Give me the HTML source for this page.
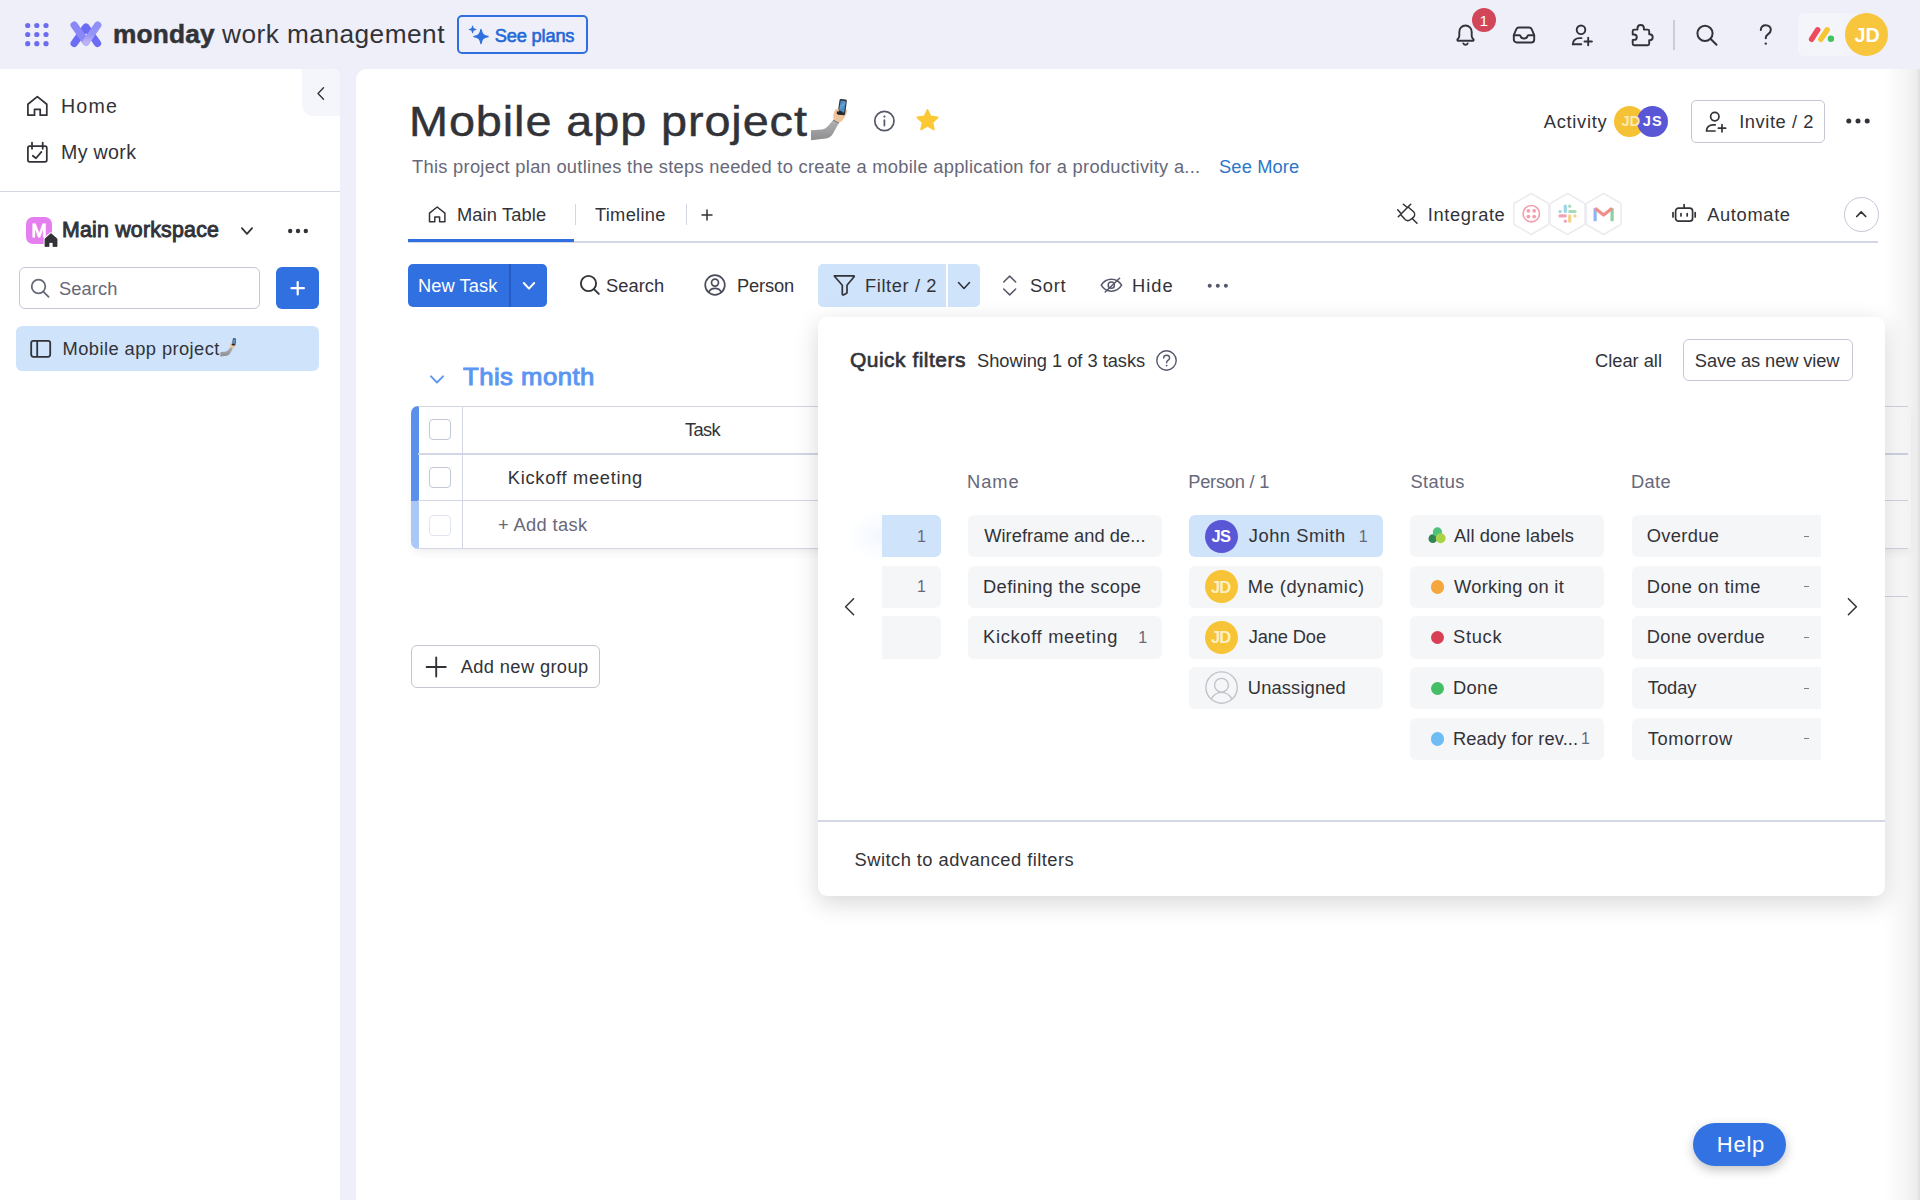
<!DOCTYPE html>
<html lang="en"><head><meta charset="utf-8"><title>Mobile app project</title>
<style>
html,body{margin:0;padding:0}
body{width:1920px;height:1200px;overflow:hidden;position:relative;background:#eeeff9;font-family:"Liberation Sans",sans-serif}
.abs{position:absolute}
.t{position:absolute;white-space:nowrap;line-height:1;font-family:"Liberation Sans",sans-serif;transform-origin:0 50%}
.cb{width:21.500px;height:21px;border:1.300px solid #c5c8d6;border-radius:4px;box-sizing:border-box;background:#fff}
</style></head>
<body>
<!-- ===== TOP BAR ===== -->
<div class="abs" style="left:0;top:0;width:1920px;height:1200px;background:#eeeff9"></div>
<!-- grid dots -->
<svg class="abs" style="left:22px;top:20px" width="30" height="30" viewBox="0 0 30 30"><g fill="#6c6cf2">
<circle cx="5.7" cy="5.5" r="2.6"/><circle cx="14.8" cy="5.5" r="2.6"/><circle cx="24" cy="5.5" r="2.6"/>
<circle cx="5.7" cy="14.5" r="2.6"/><circle cx="14.8" cy="14.5" r="2.6"/><circle cx="24" cy="14.5" r="2.6"/>
<circle cx="5.7" cy="23.7" r="2.6"/><circle cx="14.8" cy="23.7" r="2.6"/><circle cx="24" cy="23.7" r="2.6"/></g></svg>
<!-- logo X -->
<svg class="abs" style="left:66px;top:18px" width="40" height="32" viewBox="0 0 40 32">
<defs><linearGradient id="lg1" x1="0" y1="0" x2="0" y2="1"><stop offset="0" stop-color="#9090f8"/><stop offset=".55" stop-color="#9494f8"/><stop offset="1" stop-color="#bcb2f6"/></linearGradient></defs>
<g stroke-linecap="round" stroke-linejoin="round" stroke-width="7.300" fill="none">
<path d="M8.200 25.300L20 9l11.500 16.300" stroke="#6b6bf6"/>
<path d="M8.200 7.200L20 24" stroke="#8a88f7"/>
<path d="M31.700 7.200L20 24" stroke="url(#lg1)"/>
</g></svg>
<!-- See plans button -->
<div class="abs" style="left:457px;top:15px;width:130.5px;height:39px;border:2.3px solid #2f6fe0;border-radius:5px;box-sizing:border-box"></div>
<svg class="abs" style="left:467px;top:24px" width="24" height="24" viewBox="0 0 24 24" fill="#2f6fe0">
<path d="M14 5.500c.8 4.600 2.400 6.200 7 7-4.600.8-6.200 2.400-7 7-.8-4.600-2.400-6.200-7-7 4.600-.8 6.200-2.400 7-7z" stroke="#2f6fe0" stroke-width="1.400" stroke-linejoin="round"/>
<path d="M5.600 1.800c.4 2.400 1.300 3.300 3.700 3.700-2.400.4-3.300 1.300-3.700 3.700-.4-2.400-1.300-3.300-3.700-3.700 2.400-.4 3.300-1.300 3.700-3.700z" stroke="#2f6fe0" stroke-width=".7" stroke-linejoin="round"/>
</svg>
<!-- bell -->
<svg class="abs" style="left:1453px;top:22px" width="26" height="26" viewBox="0 0 26 26" fill="none" stroke="#323338" stroke-width="1.9" stroke-linecap="round" stroke-linejoin="round">
<path d="M12.500 3.500c-3.600 0-6.200 2.800-6.200 6.400v4.100c0 1.200-.7 2.300-1.700 3.200-.5.500-.3 1.500.6 1.500h14.600c.9 0 1.100-1 .6-1.500-1-.9-1.700-2-1.700-3.200v-4.100c0-3.600-2.600-6.400-6.200-6.400z"/>
<path d="M10.300 21.400c.5.900 1.300 1.400 2.200 1.400s1.700-.5 2.200-1.400"/>
</svg>
<div class="abs" style="left:1472px;top:8px;width:24px;height:24px;border-radius:50%;background:#d14658"></div>
<!-- inbox -->
<svg class="abs" style="left:1511px;top:22px" width="26" height="26" viewBox="0 0 26 26" fill="none" stroke="#323338" stroke-width="1.9" stroke-linecap="round" stroke-linejoin="round">
<path d="M2.800 13.200l2.400-5.800c.5-1.200 1.600-1.900 2.900-1.900h9.800c1.300 0 2.400.7 2.900 1.900l2.400 5.800v4.300c0 1.700-1.300 3-3 3h-14.400c-1.700 0-3-1.300-3-3z"/>
<path d="M2.800 13.200h5.700c.5 0 .9.300 1 .8.300 1.400 1.500 2.500 3.500 2.500s3.200-1.100 3.500-2.500c.1-.5.500-.8 1-.8h5.700"/>
</svg>
<!-- invite person -->
<svg class="abs" style="left:1569px;top:22px" width="26" height="26" viewBox="0 0 26 26" fill="none" stroke="#323338" stroke-width="1.9" stroke-linecap="round" stroke-linejoin="round">
<circle cx="12" cy="7.800" r="4.300"/>
<path d="M3.800 22.300c0-3.800 3-6.200 6.500-6.200h2.200"/>
<path d="M3.800 22.300h8.500"/>
<path d="M19.200 15.800v7.400M15.500 19.500h7.400"/>
</svg>
<!-- puzzle -->
<svg class="abs" style="left:1628px;top:22px" width="26" height="26" viewBox="0 0 26 26" fill="none" stroke="#323338" stroke-width="1.9" stroke-linecap="round" stroke-linejoin="round">
<path d="M9.500 6.300c0-1.900 1.400-3.300 3.200-3.300s3.200 1.400 3.200 3.300v1.300h3.800c.8 0 1.500.7 1.500 1.500v3.200h.4c1.800 0 3.100 1.300 3.100 3s-1.300 3-3.100 3h-.4v3.400c0 .8-.7 1.500-1.500 1.500h-13.500c-.8 0-1.500-.7-1.500-1.500v-3.800h1.300c1.600 0 2.800-1.100 2.800-2.700s-1.200-2.700-2.800-2.700h-1.300v-3.400c0-.8.7-1.500 1.500-1.500h3.300z"/>
</svg>
<div class="abs" style="left:1673px;top:20px;width:1.500px;height:29.500px;background:#c9ccd9"></div>
<!-- search -->
<svg class="abs" style="left:1694px;top:22px" width="26" height="26" viewBox="0 0 26 26" fill="none" stroke="#323338" stroke-width="2" stroke-linecap="round">
<circle cx="11" cy="11.300" r="7.600"/><path d="M16.700 17l5.800 5.800"/>
</svg>
<!-- help ? -->
<svg class="abs" style="left:1753px;top:22px" width="26" height="26" viewBox="0 0 26 26" fill="none" stroke="#323338" stroke-width="2" stroke-linecap="round" stroke-linejoin="round">
<path d="M7.800 8c.2-2.700 2.200-4.700 5-4.700 2.900 0 5 1.900 5 4.600 0 2.300-1.400 3.400-2.900 4.400-1.300.9-2.100 1.600-2.100 3.300v.6"/>
<circle cx="12.800" cy="21.600" r="1.200" fill="#323338" stroke="none"/>
</svg>
<!-- product switcher -->
<div class="abs" style="left:1797.500px;top:13px;width:70px;height:43px;border-radius:6px 0 0 6px;background:linear-gradient(90deg,#f4f5fb 0,#f4f5fb 60%,rgba(244,245,251,0) 100%)"></div>
<svg class="abs" style="left:1806px;top:23.700px" width="32" height="22" viewBox="0 0 32 22" fill="none" stroke-linecap="round">
<line x1="5.600" y1="15.300" x2="11.700" y2="5.800" stroke="#ef4b5e" stroke-width="5.500"/>
<line x1="14.900" y1="15.300" x2="21.200" y2="5.800" stroke="#f6c535" stroke-width="5.500"/>
<circle cx="24.900" cy="14.800" r="3.200" fill="#3fc45f"/>
</svg>
<div class="abs" style="left:1845.200px;top:13.100px;width:42.800px;height:42.800px;border-radius:50%;background:#f7c63c"></div>

<!-- ===== SIDEBAR ===== -->
<div class="abs" style="left:0;top:69.300px;width:340px;height:1131px;background:#fff;border-top-right-radius:7px"></div>
<div class="abs" style="left:302px;top:69.300px;width:38px;height:47.200px;background:#f5f6fb;border-radius:0 7px 0 12px"></div>
<svg class="abs" style="left:313px;top:85px" width="16" height="16" viewBox="0 0 16 16" fill="none" stroke="#323338" stroke-width="1.400" stroke-linecap="round" stroke-linejoin="round"><path d="M10.500 2.800l-5.500 5.700 5.500 5.700"/></svg>
<!-- home -->
<svg class="abs" style="left:24px;top:93px" width="28" height="28" viewBox="0 0 28 28" fill="none" stroke="#323338" stroke-width="1.750" stroke-linecap="round" stroke-linejoin="round">
<path d="M3.900 11.300L13.350 3.600L22.800 11.300V22.200H16.200V16.300H10.500V22.200H3.900Z"/>
</svg>
<!-- my work -->
<svg class="abs" style="left:24px;top:139px" width="28" height="28" viewBox="0 0 28 28" fill="none" stroke="#323338" stroke-width="1.750" stroke-linecap="round" stroke-linejoin="round">
<rect x="3.900" y="7.100" width="18.900" height="15.800" rx="1.800"/>
<path d="M8 3.600v6.200M18.700 3.600v6.200"/>
<path d="M8.800 16.700l3.200 2.600 5.400-6.400"/>
</svg>
<div class="abs" style="left:0;top:190.800px;width:340px;height:1.400px;background:#d3d6e5"></div>
<!-- workspace icon -->
<div class="abs" style="left:25.500px;top:217px;width:26.500px;height:27px;border-radius:7px;background:#e57ff0"></div>
<svg class="abs" style="left:42px;top:231px" width="18" height="18" viewBox="0 0 18 18">
<path d="M9 2.600l6 5.200v7.700h-4v-4h-4v4h-4v-7.700z" fill="#323338" stroke="#fff" stroke-width="2.600" stroke-linejoin="round"/>
<path d="M9 2.600l6 5.200v7.700h-4v-4h-4v4h-4v-7.700z" fill="#323338" stroke="#323338" stroke-width=".8" stroke-linejoin="round"/>
</svg>
<svg class="abs" style="left:238px;top:223px" width="18" height="16" viewBox="0 0 18 16" fill="none" stroke="#323338" stroke-width="1.800" stroke-linecap="round" stroke-linejoin="round"><path d="M3.900 5.200l5.100 5.600 5.100-5.600"/></svg>
<svg class="abs" style="left:285px;top:226px" width="26" height="10" viewBox="0 0 26 10" fill="#323338"><circle cx="5.200" cy="5" r="2.200"/><circle cx="13" cy="5" r="2.200"/><circle cx="20.800" cy="5" r="2.200"/></svg>
<!-- sidebar search -->
<div class="abs" style="left:18.500px;top:267px;width:241.500px;height:42px;border:1.300px solid #c5c8d6;border-radius:6px;box-sizing:border-box;background:#fff"></div>
<svg class="abs" style="left:28px;top:276px" width="24" height="24" viewBox="0 0 24 24" fill="none" stroke="#676879" stroke-width="1.800" stroke-linecap="round"><circle cx="10.500" cy="10.500" r="6.800"/><path d="M15.600 15.800l5 5"/></svg>
<div class="abs" style="left:276px;top:266.500px;width:42.800px;height:42.500px;border-radius:6px;background:#3070e1"></div>
<svg class="abs" style="left:288px;top:278px" width="20" height="20" viewBox="0 0 20 20" stroke="#fff" stroke-width="2.200" stroke-linecap="round"><path d="M9.700 4v12.400M3.500 10.200h12.400"/></svg>
<!-- sidebar selected item -->
<div class="abs" style="left:16px;top:326px;width:302.800px;height:45px;border-radius:6px;background:#cfe3fb"></div>
<svg class="abs" style="left:28px;top:336px" width="26" height="26" viewBox="0 0 26 26" fill="none" stroke="#323338" stroke-width="1.800" stroke-linejoin="round"><rect x="3.200" y="4.800" width="19" height="16" rx="2.200"/><path d="M9.200 4.800v16"/></svg>
<!-- ===== CONTENT PANEL ===== -->
<div class="abs" style="left:356px;top:69.300px;width:1564px;height:1131px;background:#fff;border-top-left-radius:11px"></div>
<!-- emoji selfie (title) -->
<svg width="0" height="0" style="position:absolute"><symbol id="selfie" viewBox="0 0 44 48"><defs><linearGradient id="slv" x1="0" y1="0" x2="0" y2="1"><stop offset="0" stop-color="#b2b2b4"/><stop offset="1" stop-color="#8e8e91"/></linearGradient></defs>
<path d="M3 34.200L14 33.400Q17.500 33 19.600 30.500L25.400 23.800L31.200 26.600L24.600 38.200Q22.500 41.600 18 42.400L3 44.200Z" fill="url(#slv)"/>
<path d="M25.100 24.100L31 26.900" stroke="#77777b" stroke-width="1.100" fill="none"/>
<path d="M25.800 23.600C25 20 25.200 16.500 27 14.200C28.500 12.500 30.500 12.800 31.500 14L38.600 13.200C39.300 15.500 38.600 18.500 36.800 21L33.600 25.400L31.200 26.600Z" fill="#efc49c"/>
<g transform="rotate(8 34.500 11)"><rect x="30.600" y="3.200" width="7.400" height="15.800" rx="1.500" fill="#2b3037"/><rect x="31.700" y="4.800" width="5.200" height="11.400" rx=".5" fill="#4c8ec2"/><path d="M31.700 10l5.200-5.200v3.500l-5.200 6z" fill="#6aa7d6" opacity=".7"/></g>
<path d="M28.800 15.200c1.800-.9 4-.5 5.600.5l-.4 2.600c-1.600.8-3.800.7-5.200-.3z" fill="#23262b"/>
<path d="M27 14.200c1.200-1.400 2.800-1.600 4-.6l-.5 2.200c-1-.6-2.200-.5-3.200.2z" fill="#efc49c"/>
</symbol></svg>
<svg class="abs" style="left:808px;top:96px" width="44" height="48"><use href="#selfie"/></svg>
<svg class="abs" style="left:219.300px;top:337.400px" width="19.400" height="21.100"><use href="#selfie"/></svg>
<!-- info icon -->
<svg class="abs" style="left:872px;top:109px" width="24" height="24" viewBox="0 0 24 24" fill="none" stroke="#55586a" stroke-width="1.700" stroke-linecap="round"><circle cx="12.400" cy="12" r="9.600"/><path d="M12.400 11v5.600"/><circle cx="12.400" cy="7.600" r="1.100" fill="#55586a" stroke="none"/></svg>
<!-- star -->
<svg class="abs" style="left:914px;top:107px" width="27" height="27" viewBox="0 0 27 27"><path d="M13.500 2.800l3.100 6.600 7.200.9-5.300 5 1.400 7.200-6.400-3.600-6.400 3.600 1.400-7.200-5.300-5 7.200-.9z" fill="#fcc835" stroke="#fcc835" stroke-width="1.600" stroke-linejoin="round"/></svg>
<!-- activity avatars -->
<div class="abs" style="left:1614.200px;top:105.800px;width:31px;height:31px;border-radius:50%;background:#f5c235"></div>
<div class="abs" style="left:1636.500px;top:105.800px;width:31px;height:31px;border-radius:50%;background:#5957d6"></div>
<!-- invite button -->
<div class="abs" style="left:1691px;top:100px;width:134.300px;height:42.500px;border:1.300px solid #c4c6d2;border-radius:5px;box-sizing:border-box"></div>
<svg class="abs" style="left:1703px;top:109px" width="26" height="26" viewBox="0 0 26 26" fill="none" stroke="#323338" stroke-width="1.700" stroke-linecap="round" stroke-linejoin="round">
<circle cx="11.800" cy="7.600" r="4.200"/><path d="M3.500 22c0-3.800 3-6.200 6.500-6.200h2.200M3.500 22h8.500M19 15.600v7.200M15.400 19.200h7.200"/></svg>
<svg class="abs" style="left:1844px;top:116px" width="28" height="10" viewBox="0 0 28 10" fill="#323338"><circle cx="4.800" cy="5" r="2.500"/><circle cx="14" cy="5" r="2.500"/><circle cx="23.200" cy="5" r="2.500"/></svg>
<!-- tabs -->
<svg class="abs" style="left:426px;top:204px" width="22" height="22" viewBox="0 0 22 22" fill="none" stroke="#323338" stroke-width="1.500" stroke-linecap="round" stroke-linejoin="round">
<path d="M3.500 9.100L11.200 3L18.900 9.100V17.800H13.600V13.100H8.800V17.800H3.500Z"/></svg>
<div class="abs" style="left:408px;top:241.300px;width:1470.300px;height:1.300px;background:#d3d6e5"></div>
<div class="abs" style="left:408px;top:238.600px;width:166.400px;height:3px;background:#2f6fe0"></div>
<div class="abs" style="left:574.800px;top:204px;width:1.300px;height:21px;background:#d3d6e5"></div>
<div class="abs" style="left:685.600px;top:204px;width:1.300px;height:21px;background:#d3d6e5"></div>
<svg class="abs" style="left:699px;top:207px" width="16" height="16" viewBox="0 0 16 16" stroke="#323338" stroke-width="1.500" stroke-linecap="round"><path d="M8 3v10M3 8h10"/></svg>
<!-- integrate -->
<svg class="abs" style="left:1395px;top:201px" width="26" height="26" viewBox="0 0 26 26" fill="none" stroke="#323338" stroke-width="1.500" stroke-linecap="round" stroke-linejoin="round">
<path d="M3.300 15.700L15.700 3.300M8.300 3.200L12 6.300M2.700 8.800L6.200 12.700M17.200 17.400L22 22.300"/>
<path d="M13.400 6.200L18.600 10.700Q20.400 12.500 19.600 14.600Q19 16.100 17.200 17.400L14.600 19.100Q12.300 20.300 10.400 18.700L5.800 13.800"/>
</svg>
<!-- hexagons -->
<svg class="abs" style="left:1510px;top:191px" width="116" height="46" viewBox="0 0 116 46" fill="#fff" stroke="#ececf0" stroke-width="1.600" stroke-linejoin="round">
<path id="hx" d="M21.300 2.500l16.500 9.500a2 2 0 0 1 1 1.700v18.600a2 2 0 0 1-1 1.700l-16.500 9.500-16.500-9.500a2 2 0 0 1-1-1.700v-18.600a2 2 0 0 1 1-1.700z"/>
<use href="#hx" x="36.200"/><use href="#hx" x="72.300"/>
<g stroke="none">
<circle cx="21.300" cy="22.700" r="8.200" fill="none" stroke="#f5a0ac" stroke-width="1.700"/>
<circle cx="18.400" cy="19.800" r="1.900" fill="#f5a0ac"/><circle cx="24.200" cy="19.800" r="1.900" fill="#f5a0ac"/><circle cx="18.400" cy="25.600" r="1.900" fill="#f5a0ac"/><circle cx="24.200" cy="25.600" r="1.900" fill="#f5a0ac"/>
<g transform="translate(57.500 22.700)" stroke-width="3.200" stroke-linecap="round" fill="none">
<path d="M-2.200 -7.500v5.300" stroke="#9ad5e8"/><path d="M-7.500 -2.200h.1" stroke="#9ad5e8"/>
<path d="M7.500 -2.200h-5.300" stroke="#a5dbb8"/><path d="M2.200 -7.500v.1" stroke="#a5dbb8"/>
<path d="M2.200 7.500v-5.300" stroke="#f3d38a"/><path d="M7.500 2.200h-.1" stroke="#f3d38a"/>
<path d="M-7.500 2.200h5.300" stroke="#f0a4b8"/><path d="M-2.200 7.500v-.1" stroke="#f0a4b8"/>
</g>
<g transform="translate(83.600 15.200)" fill="none" stroke-width="3.200" stroke-linejoin="round" stroke-linecap="butt">
<path d="M1.500 15v-13" stroke="#8fb4f3"/><path d="M18.500 15v-13" stroke="#8fd0a0"/>
<path d="M1.500 2l8.500 6.800 8.500-6.800" stroke="#f08f8a"/>
</g></g></svg>
<!-- automate robot -->
<svg class="abs" style="left:1671px;top:201px" width="26" height="26" viewBox="0 0 26 26" fill="none" stroke="#323338" stroke-width="1.700" stroke-linecap="round" stroke-linejoin="round">
<rect x="4.600" y="7.200" width="17" height="13" rx="3"/><path d="M13.100 3.500v3.700M2 11.500v4.500M24.200 11.500v4.500M10 12.500v2.500M16.200 12.500v2.500"/></svg>
<!-- collapse circle -->
<div class="abs" style="left:1844px;top:197.300px;width:34.500px;height:34.500px;border:1.200px solid #c5c8d6;border-radius:50%;box-sizing:border-box"></div>
<svg class="abs" style="left:1853px;top:207px" width="16" height="14" viewBox="0 0 16 14" fill="none" stroke="#323338" stroke-width="1.700" stroke-linecap="round" stroke-linejoin="round"><path d="M3.700 9.500l4.500-4.700 4.500 4.700"/></svg>

<!-- ===== TOOLBAR ===== -->
<div class="abs" style="left:408px;top:264px;width:138.800px;height:42.500px;border-radius:5px;background:#3070e1"></div>
<div class="abs" style="left:509.300px;top:264px;width:1.300px;height:42.500px;background:#245bc4"></div>
<svg class="abs" style="left:520px;top:278px" width="18" height="16" viewBox="0 0 18 16" fill="none" stroke="#fff" stroke-width="2" stroke-linecap="round" stroke-linejoin="round"><path d="M3.800 5l5.200 5.600 5.200-5.600"/></svg>
<svg class="abs" style="left:577px;top:272px" width="26" height="26" viewBox="0 0 26 26" fill="none" stroke="#323338" stroke-width="1.900" stroke-linecap="round"><circle cx="11.500" cy="11.500" r="7.600"/><path d="M17.200 17.300l4.600 4.600"/></svg>
<svg class="abs" style="left:702px;top:272px" width="26" height="26" viewBox="0 0 26 26" fill="none" stroke="#4a4d5c" stroke-width="1.700" stroke-linecap="round"><circle cx="13" cy="13" r="9.800"/><circle cx="13" cy="10.600" r="3.500"/><path d="M6.600 20.200c1.300-2.600 3.600-3.900 6.400-3.900s5.100 1.300 6.400 3.900"/></svg>
<!-- filter button -->
<div class="abs" style="left:818px;top:264px;width:162px;height:42.500px;border-radius:5px;background:#cfe3fb"></div>
<div class="abs" style="left:946.300px;top:264px;width:1.600px;height:42.500px;background:#fff"></div>
<svg class="abs" style="left:831px;top:272px" width="26" height="26" viewBox="0 0 26 26" fill="none" stroke="#323338" stroke-width="1.700" stroke-linecap="round" stroke-linejoin="round"><path d="M3.600 3.800h19.400c.5 0 .8.600.4 1l-7.100 8.400v7.300c0 .3-.2.600-.4.700l-3.200 1.700c-.5.300-1.100-.1-1.100-.7v-9l-7.400-8.400c-.4-.4-.1-1 .4-1z" transform="translate(-.3 0)"/></svg>
<svg class="abs" style="left:955px;top:278px" width="18" height="16" viewBox="0 0 18 16" fill="none" stroke="#323338" stroke-width="1.600" stroke-linecap="round" stroke-linejoin="round"><path d="M3.500 4.500l5.500 6 5.500-6"/></svg>
<!-- sort -->
<svg class="abs" style="left:997px;top:272px" width="26" height="26" viewBox="0 0 26 26" fill="none" stroke="#55586a" stroke-width="1.500" stroke-linecap="round" stroke-linejoin="round"><path d="M6.700 10L12.700 4.100L18.700 10M6.700 17L12.700 22.900L18.700 17"/></svg>
<!-- hide -->
<svg class="abs" style="left:1098px;top:272px" width="28" height="26" viewBox="0 0 28 26" fill="none" stroke="#55586a" stroke-width="1.500" stroke-linecap="round" stroke-linejoin="round"><path d="M3.200 13.200c2.400-4 5.900-6 10.200-6s7.800 2 10.200 6c-2.400 4-5.900 6-10.200 6s-7.800-2-10.200-6z"/><circle cx="13.300" cy="13.200" r="3.100"/><path d="M7.200 20L21.600 6.300"/></svg>
<svg class="abs" style="left:1205px;top:281px" width="26" height="10" viewBox="0 0 26 10" fill="#55586a"><circle cx="4.700" cy="4.800" r="2"/><circle cx="12.800" cy="4.800" r="2"/><circle cx="20.900" cy="4.800" r="2"/></svg>

<!-- ===== GROUP / TABLE ===== -->
<svg class="abs" style="left:427px;top:370px" width="20" height="18" viewBox="0 0 20 18" fill="none" stroke="#5b97f3" stroke-width="1.900" stroke-linecap="round" stroke-linejoin="round"><path d="M4 6.300l6 6.200 6-6.200"/></svg>
<div class="abs" style="left:411px;top:405.500px;width:1500px;height:143px;box-shadow:0 5px 10px -2px rgba(0,0,0,.07);border-radius:7px 0 0 7px"></div>
<div class="abs" style="left:411px;top:405.500px;width:7.600px;height:95.500px;background:#5b8fee;border-top-left-radius:7px"></div>
<div class="abs" style="left:411px;top:501px;width:7.600px;height:47.500px;background:#aac7f7;border-bottom-left-radius:7px"></div>
<div class="abs" style="left:418px;top:405.600px;width:1490px;height:1.300px;background:#d3d6e5"></div>
<div class="abs" style="left:418px;top:453.300px;width:1490px;height:1.300px;background:#d3d6e5"></div>
<div class="abs" style="left:418px;top:500.200px;width:1490px;height:1.300px;background:#d3d6e5"></div>
<div class="abs" style="left:416px;top:547.600px;width:1492px;height:1.300px;background:#d3d6e5"></div>
<div class="abs" style="left:1880px;top:596px;width:28px;height:1.300px;background:#d3d6e5"></div>
<div class="abs" style="left:461.500px;top:406px;width:1.300px;height:142px;background:#d3d6e5"></div>
<div class="abs cb" style="left:429px;top:419px"></div>
<div class="abs cb" style="left:429px;top:467px"></div>
<div class="abs cb" style="left:429px;top:515px;border-color:#e3e5ee"></div>
<!-- add new group -->
<div class="abs" style="left:410.800px;top:645.300px;width:189px;height:42.400px;border:1.300px solid #c4c6d2;border-radius:6px;box-sizing:border-box"></div>
<svg class="abs" style="left:423px;top:654px" width="26" height="26" viewBox="0 0 26 26" stroke="#323338" stroke-width="1.900" stroke-linecap="round"><path d="M13.200 3.400v19.200M3.600 13h19.200"/></svg>
<!-- ===== POPUP ===== -->
<div class="abs" style="left:818px;top:317.300px;width:1066.800px;height:578.500px;background:#fff;border-radius:9px;box-shadow:0 7px 24px rgba(0,0,0,.16)"></div>
<svg class="abs" style="left:1154.100px;top:348.100px" width="25" height="25" viewBox="0 0 25 25" fill="none" stroke="#55586a" stroke-width="1.400" stroke-linecap="round" stroke-linejoin="round"><circle cx="12.500" cy="12.500" r="9.700"/><path d="M9.600 10c.1-1.700 1.300-2.800 3-2.800s3 1.100 3 2.700c0 1.300-.8 1.900-1.700 2.500-.8.600-1.300 1-1.300 2v.4"/><circle cx="12.600" cy="17.600" r=".9" fill="#55586a" stroke="none"/></svg>
<div class="abs" style="left:1683px;top:339.200px;width:169.800px;height:41.500px;border:1.300px solid #c5c8d6;border-radius:6px;box-sizing:border-box"></div>
<div class="abs" style="left:882px;top:515px;width:58.500px;height:42.3px;background:#cfe3fb;border-radius:0 6px 6px 0"></div>
<div class="abs" style="left:882px;top:565.67px;width:58.500px;height:42.3px;background:#f5f6f8;border-radius:0 6px 6px 0"></div>
<div class="abs" style="left:882px;top:616.33px;width:58.500px;height:42.3px;background:#f5f6f8;border-radius:0 6px 6px 0"></div>
<div class="abs" style="left:846px;top:511px;width:36px;height:50.3px;background:radial-gradient(ellipse at 100% 50%,rgba(200,220,250,.22),rgba(255,255,255,0) 72%)"></div>
<div class="abs" style="left:967.600px;top:515px;width:194.500px;height:42.3px;background:#f5f6f8;border-radius:6px"></div>
<div class="abs" style="left:967.600px;top:565.67px;width:194.500px;height:42.3px;background:#f5f6f8;border-radius:6px"></div>
<div class="abs" style="left:967.600px;top:616.33px;width:194.500px;height:42.3px;background:#f5f6f8;border-radius:6px"></div>
<div class="abs" style="left:1188.900px;top:515px;width:194.300px;height:42.3px;background:#cfe3fb;border-radius:6px"></div>
<div class="abs" style="left:1188.900px;top:565.67px;width:194.300px;height:42.3px;background:#f5f6f8;border-radius:6px"></div>
<div class="abs" style="left:1188.900px;top:616.33px;width:194.300px;height:42.3px;background:#f5f6f8;border-radius:6px"></div>
<div class="abs" style="left:1188.900px;top:667px;width:194.300px;height:42.3px;background:#f5f6f8;border-radius:6px"></div>
<div class="abs" style="left:1204.800px;top:519.65px;width:33px;height:33px;border-radius:50%;background:#5957d6"></div>
<div class="abs" style="left:1204.800px;top:570.32px;width:33px;height:33px;border-radius:50%;background:#f7c437"></div>
<div class="abs" style="left:1204.800px;top:620.98px;width:33px;height:33px;border-radius:50%;background:#f7c437"></div>
<svg class="abs" style="left:1203.800px;top:670.45px" width="35" height="35" viewBox="0 0 35 35" fill="none" stroke="#c1c2ca" stroke-width="1.350"><circle cx="17.600" cy="17.500" r="15.700"/><circle cx="17.500" cy="15.200" r="6.900"/><path d="M7.400 28.800C9.600 24.700 13 22.400 17.500 22.400S25.400 24.700 27.700 28.800"/></svg>
<div class="abs" style="left:1410.200px;top:515px;width:194.300px;height:42.3px;background:#f5f6f8;border-radius:6px"></div>
<div class="abs" style="left:1410.200px;top:565.67px;width:194.300px;height:42.3px;background:#f5f6f8;border-radius:6px"></div>
<div class="abs" style="left:1410.200px;top:616.33px;width:194.300px;height:42.3px;background:#f5f6f8;border-radius:6px"></div>
<div class="abs" style="left:1410.200px;top:667px;width:194.300px;height:42.3px;background:#f5f6f8;border-radius:6px"></div>
<div class="abs" style="left:1410.200px;top:717.67px;width:194.300px;height:42.3px;background:#f5f6f8;border-radius:6px"></div>
<div class="abs" style="left:1431px;top:580.32px;width:13.200px;height:13.200px;border-radius:50%;background:#f5a63d"></div>
<div class="abs" style="left:1431px;top:630.98px;width:13.200px;height:13.200px;border-radius:50%;background:#d83f55"></div>
<div class="abs" style="left:1431px;top:681.65px;width:13.200px;height:13.200px;border-radius:50%;background:#45bf66"></div>
<div class="abs" style="left:1431px;top:732.32px;width:13.200px;height:13.200px;border-radius:50%;background:#6dbcf4"></div>
<svg class="abs" style="left:1427px;top:526.15px" width="22" height="20" viewBox="0 0 22 20"><circle cx="5.800" cy="12.650" r="4.300" fill="#2f8553"/><circle cx="10.400" cy="5.950" r="4.600" fill="#4fc37a"/><circle cx="13.700" cy="12.250" r="4.900" fill="#a9d246"/></svg>
<div class="abs" style="left:1631.500px;top:515px;width:189px;height:42.3px;background:#f5f6f8;border-radius:6px 0 0 6px"></div>
<div class="abs" style="left:1803.700px;top:536px;width:5.600px;height:1.300px;background:#7d7f8e"></div>
<div class="abs" style="left:1631.500px;top:565.67px;width:189px;height:42.3px;background:#f5f6f8;border-radius:6px 0 0 6px"></div>
<div class="abs" style="left:1803.700px;top:586px;width:5.600px;height:1.300px;background:#7d7f8e"></div>
<div class="abs" style="left:1631.500px;top:616.33px;width:189px;height:42.3px;background:#f5f6f8;border-radius:6px 0 0 6px"></div>
<div class="abs" style="left:1803.700px;top:637px;width:5.600px;height:1.300px;background:#7d7f8e"></div>
<div class="abs" style="left:1631.500px;top:667px;width:189px;height:42.3px;background:#f5f6f8;border-radius:6px 0 0 6px"></div>
<div class="abs" style="left:1803.700px;top:688px;width:5.600px;height:1.300px;background:#7d7f8e"></div>
<div class="abs" style="left:1631.500px;top:717.67px;width:189px;height:42.3px;background:#f5f6f8;border-radius:6px 0 0 6px"></div>
<div class="abs" style="left:1803.700px;top:738px;width:5.600px;height:1.300px;background:#7d7f8e"></div>
<svg class="abs" style="left:840px;top:596px" width="20" height="22" viewBox="0 0 20 22" fill="none" stroke="#323338" stroke-width="1.500" stroke-linecap="round" stroke-linejoin="round"><path d="M13.600 2.800l-8 8 8 8"/></svg>
<svg class="abs" style="left:1842px;top:596px" width="20" height="22" viewBox="0 0 20 22" fill="none" stroke="#323338" stroke-width="1.500" stroke-linecap="round" stroke-linejoin="round"><path d="M6.400 2.800l8 8-8 8"/></svg>
<div class="abs" style="left:818px;top:820.300px;width:1066.800px;height:1.300px;background:#d3d6e5"></div>
<div class="abs" style="left:1692.600px;top:1122.500px;width:93.500px;height:43.700px;border-radius:22px;background:#3272e2;box-shadow:0 4px 11px rgba(0,0,0,.24)"></div>
<div class="abs" style="left:1884px;top:69px;width:36px;height:1131px;background:linear-gradient(90deg,rgba(0,0,0,0),rgba(0,0,0,.018) 30%,rgba(0,0,0,.04) 62%,rgba(0,0,0,.07) 90%,rgba(0,0,0,.125))"></div>

<!-- ===== TEXT ===== -->
<span class="t" style="left:112.80px;top:21.84px;font-size:25px;color:#323338;font-weight:bold;letter-spacing:0.171px;-webkit-text-stroke:0.5px #323338;transform:scaleX(1.05);">monday</span>
<span class="t" style="left:222.00px;top:21.84px;font-size:25px;color:#323338;letter-spacing:0.442px;transform:scaleX(1.05);">work management</span>
<span class="t" style="left:494.80px;top:26.51px;font-size:18.3px;color:#2468d6;letter-spacing:-0.200px;-webkit-text-stroke:0.6px #2468d6;">See plans</span>
<span class="t" style="left:1479.50px;top:13.38px;font-size:15.5px;color:#ffffff;">1</span>
<span class="t" style="left:1854.40px;top:26.04px;font-size:19.8px;color:#ffffff;font-weight:bold;letter-spacing:0.200px;">JD</span>
<span class="t" style="left:61.00px;top:97.41px;font-size:19.6px;color:#323338;letter-spacing:1.200px;">Home</span>
<span class="t" style="left:61.00px;top:143.41px;font-size:19.6px;color:#323338;letter-spacing:0.333px;">My work</span>
<span class="t" style="left:31.40px;top:222.09px;font-size:18.2px;color:#ffffff;-webkit-text-stroke:0.9px #ffffff;">M</span>
<span class="t" style="left:62.00px;top:219.77px;font-size:21.3px;color:#323338;letter-spacing:0.231px;-webkit-text-stroke:0.95px #323338;">Main workspace</span>
<span class="t" style="left:59.00px;top:280.11px;font-size:18.3px;color:#676879;letter-spacing:0.080px;">Search</span>
<span class="t" style="left:62.60px;top:339.51px;font-size:18.3px;color:#323338;letter-spacing:0.435px;">Mobile app project</span>
<span class="t" style="left:408.80px;top:101.02px;font-size:41.8px;color:#323338;letter-spacing:0.809px;-webkit-text-stroke:0.45px #323338;transform:scaleX(1.12);">Mobile app project</span>
<span class="t" style="left:412.00px;top:157.51px;font-size:18.3px;color:#676879;letter-spacing:0.289px;">This project plan outlines the steps needed to create a mobile application for a productivity a...</span>
<span class="t" style="left:1219.00px;top:157.51px;font-size:18.3px;color:#2b76c9;letter-spacing:0.143px;">See More</span>
<span class="t" style="left:457.00px;top:205.51px;font-size:18.3px;color:#323338;letter-spacing:0.111px;">Main Table</span>
<span class="t" style="left:595.00px;top:205.51px;font-size:18.3px;color:#323338;letter-spacing:0.286px;">Timeline</span>
<span class="t" style="left:1543.80px;top:112.51px;font-size:18.3px;color:#323338;letter-spacing:0.700px;">Activity</span>
<span class="t" style="left:1642.80px;top:113.94px;font-size:14.6px;color:#ffffff;font-weight:bold;letter-spacing:1.000px;">JS</span>
<span class="t" style="left:1621.50px;top:113.94px;font-size:14.6px;color:#fbe9b0;font-weight:bold;">JD</span>
<span class="t" style="left:1739.20px;top:112.51px;font-size:18.3px;color:#323338;letter-spacing:0.567px;">Invite / 2</span>
<span class="t" style="left:1427.80px;top:205.51px;font-size:18.3px;color:#323338;letter-spacing:0.600px;">Integrate</span>
<span class="t" style="left:1707.20px;top:205.51px;font-size:18.3px;color:#323338;letter-spacing:0.657px;">Automate</span>
<span class="t" style="left:418.00px;top:276.51px;font-size:18.3px;color:#ffffff;letter-spacing:0.071px;">New Task</span>
<span class="t" style="left:606.00px;top:276.51px;font-size:18.3px;color:#323338;letter-spacing:0.050px;">Search</span>
<span class="t" style="left:737.00px;top:276.51px;font-size:18.3px;color:#323338;letter-spacing:-0.150px;">Person</span>
<span class="t" style="left:865.00px;top:276.51px;font-size:18.3px;color:#323338;letter-spacing:0.611px;">Filter / 2</span>
<span class="t" style="left:1030.00px;top:276.51px;font-size:18.3px;color:#323338;letter-spacing:0.667px;">Sort</span>
<span class="t" style="left:1132.00px;top:276.51px;font-size:18.3px;color:#323338;letter-spacing:1.000px;">Hide</span>
<span class="t" style="left:463.20px;top:364.51px;font-size:24.5px;color:#5b96f2;letter-spacing:0.434px;-webkit-text-stroke:1.0px #5b96f2;transform:scaleX(1.05);">This month</span>
<span class="t" style="left:685.00px;top:420.51px;font-size:18.3px;color:#323338;letter-spacing:-0.633px;">Task</span>
<span class="t" style="left:507.80px;top:468.81px;font-size:18.3px;color:#323338;letter-spacing:0.700px;">Kickoff meeting</span>
<span class="t" style="left:498.00px;top:515.51px;font-size:18.3px;color:#676879;letter-spacing:0.356px;">+ Add task</span>
<span class="t" style="left:460.80px;top:657.51px;font-size:18.3px;color:#323338;letter-spacing:0.358px;">Add new group</span>
<span class="t" style="left:850.00px;top:349.22px;font-size:21px;color:#323338;letter-spacing:0.479px;-webkit-text-stroke:0.65px #323338;">Quick filters</span>
<span class="t" style="left:977.00px;top:351.51px;font-size:18.3px;color:#323338;letter-spacing:-0.026px;">Showing 1 of 3 tasks</span>
<span class="t" style="left:1595.00px;top:352.21px;font-size:18.3px;color:#323338;letter-spacing:-0.013px;">Clear all</span>
<span class="t" style="left:1694.80px;top:352.21px;font-size:18.3px;color:#323338;letter-spacing:-0.107px;">Save as new view</span>
<span class="t" style="left:967.00px;top:472.51px;font-size:18.3px;color:#676879;letter-spacing:1.000px;">Name</span>
<span class="t" style="left:1188.20px;top:472.51px;font-size:18.3px;color:#676879;letter-spacing:-0.244px;">Person / 1</span>
<span class="t" style="left:1410.40px;top:472.51px;font-size:18.3px;color:#676879;letter-spacing:0.440px;">Status</span>
<span class="t" style="left:1631.00px;top:472.51px;font-size:18.3px;color:#676879;letter-spacing:0.367px;">Date</span>
<span class="t" style="left:984.20px;top:526.51px;font-size:18.3px;color:#323338;letter-spacing:0.044px;">Wireframe and de...</span>
<span class="t" style="left:983.00px;top:577.51px;font-size:18.3px;color:#323338;letter-spacing:0.382px;">Defining the scope</span>
<span class="t" style="left:983.00px;top:627.81px;font-size:18.3px;color:#323338;letter-spacing:0.693px;">Kickoff meeting</span>
<span class="t" style="left:1138.35px;top:630.26px;font-size:16px;color:#676879;">1</span>
<span class="t" style="left:916.95px;top:528.96px;font-size:16px;color:#676879;">1</span>
<span class="t" style="left:916.95px;top:578.96px;font-size:16px;color:#676879;">1</span>
<span class="t" style="left:1248.80px;top:526.51px;font-size:18.3px;color:#323338;letter-spacing:0.533px;">John Smith</span>
<span class="t" style="left:1358.75px;top:528.96px;font-size:16px;color:#676879;">1</span>
<span class="t" style="left:1247.80px;top:577.51px;font-size:18.3px;color:#323338;letter-spacing:0.509px;">Me (dynamic)</span>
<span class="t" style="left:1248.80px;top:627.81px;font-size:18.3px;color:#323338;letter-spacing:-0.143px;">Jane Doe</span>
<span class="t" style="left:1247.80px;top:678.51px;font-size:18.3px;color:#323338;letter-spacing:0.156px;">Unassigned</span>
<span class="t" style="left:1454.00px;top:526.51px;font-size:18.3px;color:#323338;letter-spacing:0.079px;">All done labels</span>
<span class="t" style="left:1454.00px;top:577.51px;font-size:18.3px;color:#323338;letter-spacing:0.283px;">Working on it</span>
<span class="t" style="left:1453.00px;top:627.81px;font-size:18.3px;color:#323338;letter-spacing:0.700px;">Stuck</span>
<span class="t" style="left:1453.00px;top:678.51px;font-size:18.3px;color:#323338;letter-spacing:0.367px;">Done</span>
<span class="t" style="left:1453.00px;top:729.51px;font-size:18.3px;color:#323338;letter-spacing:0.100px;">Ready for rev...</span>
<span class="t" style="left:1581.00px;top:730.96px;font-size:16px;color:#676879;">1</span>
<span class="t" style="left:1646.80px;top:526.51px;font-size:18.3px;color:#323338;letter-spacing:0.317px;">Overdue</span>
<span class="t" style="left:1646.80px;top:577.51px;font-size:18.3px;color:#323338;letter-spacing:0.445px;">Done on time</span>
<span class="t" style="left:1646.80px;top:627.81px;font-size:18.3px;color:#323338;letter-spacing:0.264px;">Done overdue</span>
<span class="t" style="left:1647.80px;top:678.51px;font-size:18.3px;color:#323338;letter-spacing:-0.025px;">Today</span>
<span class="t" style="left:1647.80px;top:729.51px;font-size:18.3px;color:#323338;letter-spacing:0.586px;">Tomorrow</span>
<span class="t" style="left:854.60px;top:851.31px;font-size:18.3px;color:#323338;letter-spacing:0.472px;">Switch to advanced filters</span>
<span class="t" style="left:1716.80px;top:1134.38px;font-size:22px;color:#ffffff;letter-spacing:0.767px;">Help</span>
<span class="t" style="left:1211.60px;top:528.03px;font-size:16.5px;color:#ffffff;font-weight:bold;letter-spacing:-0.700px;">JS</span>
<span class="t" style="left:1211.00px;top:578.73px;font-size:16.5px;color:#fdf0c4;font-weight:bold;letter-spacing:-0.900px;">JD</span>
<span class="t" style="left:1211.00px;top:629.43px;font-size:16.5px;color:#fdf0c4;font-weight:bold;letter-spacing:-0.900px;">JD</span>
</body></html>
